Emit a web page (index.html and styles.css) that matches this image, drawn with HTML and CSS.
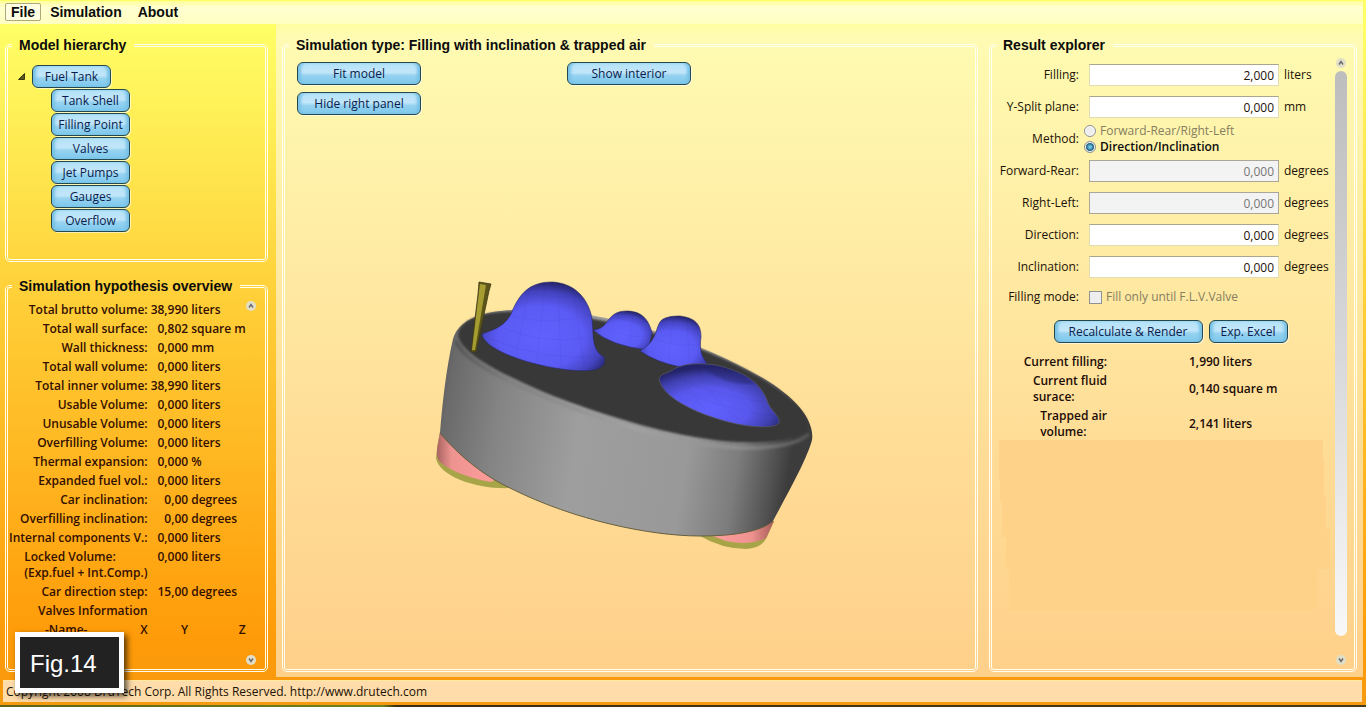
FILE: index.html
```html
<!DOCTYPE html>
<html lang="en">
<head>
<meta charset="utf-8">
<title>Fuel Tank Simulation</title>
<link rel="stylesheet" href="styles.css">
</head>
<body>
<nav class="menubar">
  <button class="menu-item active">File</button>
  <button class="menu-item">Simulation</button>
  <button class="menu-item">About</button>
</nav>

<main class="workspace">
  <aside class="sidebar">
    <fieldset class="group hierarchy">
      <legend>Model hierarchy</legend>
      <div class="tree-root">
        <svg class="expander" viewBox="0 0 7 7"><path d="M6.500 .5V6.500H.5Z" fill="#5c5420" stroke="#3c3814"/></svg>
        <button class="btn node">Fuel Tank</button>
      </div>
      <div class="tree-children">
        <button class="btn node">Tank Shell</button>
        <button class="btn node">Filling Point</button>
        <button class="btn node">Valves</button>
        <button class="btn node">Jet Pumps</button>
        <button class="btn node">Gauges</button>
        <button class="btn node">Overflow</button>
      </div>
    </fieldset>

    <fieldset class="group overview">
      <legend>Simulation hypothesis overview</legend>
      <table class="facts">
        <tr><th>Total brutto volume:</th><td class="num">38,990</td><td>liters</td></tr>
        <tr><th>Total wall surface:</th><td class="num">0,802</td><td>square m</td></tr>
        <tr><th>Wall thickness:</th><td class="num">0,000</td><td>mm</td></tr>
        <tr><th>Total wall volume:</th><td class="num">0,000</td><td>liters</td></tr>
        <tr><th>Total inner volume:</th><td class="num">38,990</td><td>liters</td></tr>
        <tr><th>Usable Volume:</th><td class="num">0,000</td><td>liters</td></tr>
        <tr><th>Unusable Volume:</th><td class="num">0,000</td><td>liters</td></tr>
        <tr><th>Overfilling Volume:</th><td class="num">0,000</td><td>liters</td></tr>
        <tr><th>Thermal expansion:</th><td class="num">0,000</td><td>%</td></tr>
        <tr><th>Expanded fuel vol.:</th><td class="num">0,000</td><td>liters</td></tr>
        <tr><th>Car inclination:</th><td class="num">0,00</td><td>degrees</td></tr>
        <tr><th>Overfilling inclination:</th><td class="num">0,00</td><td>degrees</td></tr>
        <tr><th>Internal components V.:</th><td class="num">0,000</td><td>liters</td></tr>
        <tr><th><span class="two-line">Locked Volume:<br>(Exp.fuel + Int.Comp.)</span></th><td class="num">0,000</td><td>liters</td></tr>
        <tr><th>Car direction step:</th><td class="num">15,00</td><td>degrees</td></tr>
        <tr><th>Valves Information</th><td></td><td></td></tr>
        <tr><th><span class="name-x"><span>-Name-</span><span>X</span></span></th><td class="num">Y</td><td class="num">Z</td></tr>
      </table>
      <div class="scroller">
        <button class="round" aria-label="Scroll up"><svg viewBox="0 0 10 10"><path d="M3 6.500 5 3.500 7 6.500"/></svg></button>
        <button class="round" aria-label="Scroll down"><svg viewBox="0 0 10 10"><path d="M3 3.500 5 6.500 7 3.500"/></svg></button>
      </div>
    </fieldset>
  </aside>

  <section class="content">
    <fieldset class="group view">
      <legend>Simulation type: Filling with inclination &amp; trapped air</legend>
      <div class="view-buttons">
        <button class="btn">Fit model</button>
        <button class="btn">Show interior</button>
        <button class="btn">Hide right panel</button>
      </div>
      <div class="canvas">
      <svg class="tank" viewBox="0 0 377 269" role="img" aria-label="Fuel tank model">
        <defs>
          <linearGradient id="side" x1="0" x2="1" y2=".1"><stop offset="0" stop-color="#505050"/><stop offset=".06" stop-color="#6a6a6a"/><stop offset=".2" stop-color="#848484"/><stop offset=".42" stop-color="#9e9e9e"/><stop offset=".72" stop-color="#999"/><stop offset=".86" stop-color="#7c7c7c"/><stop offset=".95" stop-color="#545454"/><stop offset="1" stop-color="#3c3c3c"/></linearGradient>
          <linearGradient id="rim" x1="0" x2="1"><stop offset="0" stop-color="#555"/><stop offset=".15" stop-color="#808080"/><stop offset=".5" stop-color="#a2a2a2"/><stop offset=".8" stop-color="#8e8e8e"/><stop offset="1" stop-color="#505050"/></linearGradient>
          <radialGradient id="dome" cx=".48" cy=".62" r=".64"><stop offset="0" stop-color="#6161ff"/><stop offset=".55" stop-color="#5a5af4"/><stop offset=".8" stop-color="#4343bf"/><stop offset="1" stop-color="#20205e"/></radialGradient>
          <radialGradient id="flat" cx=".42" cy=".72" r=".66"><stop offset="0" stop-color="#6060ff"/><stop offset=".5" stop-color="#5858ee"/><stop offset=".8" stop-color="#4040b0"/><stop offset="1" stop-color="#24246a"/></radialGradient>
          <linearGradient id="pinkL" x1="0" x2="1"><stop offset="0" stop-color="#a96461"/><stop offset=".25" stop-color="#ed9390"/><stop offset="1" stop-color="#ff9e9b"/></linearGradient>
          <linearGradient id="pinkR" x1="0" x2="1"><stop offset="0" stop-color="#ff9f9c"/><stop offset=".65" stop-color="#ee9290"/><stop offset="1" stop-color="#a85c58"/></linearGradient>
          <filter id="soft" x="-5%" y="-5%" width="110%" height="110%"><feGaussianBlur stdDeviation="1"/></filter>
        </defs>
        <path d="M4 151Q1 164 0 177C3 196 43 209 76 207Z" fill="#a8a448"/>
        <path d="M4 151 1 168Q0 178 5 182 22 195 55 201L60 198Z" fill="url(#pinkL)"/>
        <path d="M262 254Q286 268 310 268 326 267 331 256L338 240Z" fill="#a8a448"/>
        <path d="M274 254 290 260Q313 265 330 257L338 240Z" fill="url(#pinkR)"/>
        <path d="M64 30C40 33 22 41 17 58 10 88 6 126 4 152 22 174 49 196 76 208 138 239 214 255 264 255 300 255 326 250 337 240 352 212 371 178 376 159 379 140 360 116 325 96 260 58 150 20 64 30Z" fill="url(#side)"/>
        <path d="M4 152C22 174 49 196 76 208 138 239 214 255 264 255 300 255 326 250 337 240" fill="none" stroke="#66603f"/>
        <path d="M20 60C25 77 63 97 106 115 158 137 248 166 309 167 337 167 362 163 373 153" fill="none" stroke="url(#rim)" stroke-width="4" filter="url(#soft)"/>
        <path d="M22 54C24 40 42 32 69 31 156 27 267 62 325 97 359 118 377 140 371 149 358 159 334 162 309 161 248 161 157 131 110 112 66 93 25 73 22 54Z" fill="#383838" filter="url(#soft)"/>
        <path d="M157 49Q166 48 170 42C176 34 180 30 191 30 206 30 213 39 216 52L212 69Q175 65 157 49Z" fill="url(#dome)" stroke="#292962" stroke-width=".6"/>
        <path d="M204 70C221 60 219 49 224 41 227 36 236 35 244 35 259 37 265 43 265 56 263 69 266 77 272 83Q263 90 244 86 220 81 204 70Z" fill="url(#dome)" stroke="#292962" stroke-width=".6"/>
        <path d="M46 53C59 48 68 46 75 33 83 13 93 1 116 1 137 2 150 15 155 33 159 48 153 68 168 76Q171 84 162 88C137 96 48 75 46 53Z" fill="url(#dome)" stroke="#292962" stroke-width=".6"/>
        <path d="M223 97Q225 93 233 91C247 81 263 82 280 84 309 91 325 101 332 122 336 131 345 136 343 142 337 149 307 146 282 138 249 128 224 112 223 97Z" fill="url(#flat)" stroke="#555562" stroke-width=".8"/>
        <path d="M271 88C284 84 308 92 318 103 302 104 279 98 271 88Z" fill="#25256e" opacity=".5" filter="url(#soft)"/>
        <g fill="none" stroke="#26267a" stroke-opacity=".1" stroke-width=".6">
          <path d="M77 35Q112 45 154 34M67 47Q110 65 156 56M55 58Q105 79 161 76M90 13Q116 17 144 15M109 2 101 80M122 2 125 87M93 9 80 74M138 11 148 85"/>
          <path d="M224 45Q243 52 264 47M219 58Q242 67 264 63M237 36 233 79M251 37 253 82M181 36Q196 43 213 41M171 48Q191 58 213 55M197 32 194 62"/>
          <path d="M239 94Q262 111 328 121M232 101Q268 125 338 135M262 85Q263 106 307 142M282 86Q290 110 329 140M249 88Q246 105 270 129"/>
        </g>
        <path d="M43 1 55 3 53 10 40 71H35L42 13Z" fill="#5b5517" stroke="#3f3a16" stroke-width=".8"/>
        <path d="M44 3 50 4 39 69H36Z" fill="#a69d32"/>
      </svg>
      </div>
    </fieldset>

    <fieldset class="group results">
      <legend>Result explorer</legend>
      <div class="results-body">
        <form class="form">
          <label for="filling">Filling:</label><input class="box" id="filling" type="text" value="2,000"><span class="unit">liters</span>
          <label for="split">Y-Split plane:</label><input class="box" id="split" type="text" value="0,000"><span class="unit">mm</span>
          <span class="caption">Method:</span>
          <div class="choices">
            <label class="choice off"><input type="radio" name="method" disabled>Forward-Rear/Right-Left</label>
            <label class="choice on"><input type="radio" name="method" checked>Direction/Inclination</label>
          </div>
          <label for="fr">Forward-Rear:</label><input class="box" id="fr" type="text" value="0,000" disabled><span class="unit">degrees</span>
          <label for="rl">Right-Left:</label><input class="box" id="rl" type="text" value="0,000" disabled><span class="unit">degrees</span>
          <label for="dir">Direction:</label><input class="box" id="dir" type="text" value="0,000"><span class="unit">degrees</span>
          <label for="inc">Inclination:</label><input class="box" id="inc" type="text" value="0,000"><span class="unit">degrees</span>
          <span class="caption mode-label">Filling mode:</span>
          <label class="choice off mode"><input type="checkbox" disabled>Fill only until F.L.V.Valve</label>
        </form>
        <div class="actions">
          <button class="btn wide">Recalculate &amp; Render</button>
          <button class="btn node">Exp. Excel</button>
        </div>
        <table class="outcome">
          <tr><th>Current filling:</th><td>1,990 liters</td></tr>
          <tr><th><span class="two-line">Current fluid<br>surace:</span></th><td>0,140 square m</td></tr>
          <tr><th><span class="two-line">Trapped air<br>volume:</span></th><td>2,141 liters</td></tr>
        </table>
        <svg class="blank" viewBox="0 0 331 180" preserveAspectRatio="none"><path d="M0 0H324V21H325V57H327V89H331V129H319V170H10V129H7V97H3V61H1V39H0Z" fill="#ffd28a"/></svg>
      </div>
      <div class="scroller">
        <button class="round" aria-label="Scroll up"><svg viewBox="0 0 10 10"><path d="M3 6.500 5 3.500 7 6.500"/></svg></button>
        <div class="thumb"></div>
        <button class="round" aria-label="Scroll down"><svg viewBox="0 0 10 10"><path d="M3 3.500 5 6.500 7 3.500"/></svg></button>
      </div>
    </fieldset>
  </section>
</main>

<footer class="status">Copyright 2008 DruTech Corp. All Rights Reserved. http://www.drutech.com</footer>
<div class="edge"></div>
<div class="figure-tag">Fig.14</div>
</body>
</html>
```

FILE: styles.css
```css
* { box-sizing: border-box; }

body {
  margin: 0;
  min-height: 100vh;
  display: flex;
  flex-direction: column;
  position: relative;
  font: 12px/16px "Open Sans", "Noto Sans", sans-serif;
  color: #1c1206;
  background: linear-gradient(#ffff66 24px, #ffcf38 300px, #ff9b08 640px, #f59a10);
}

button, input { font: inherit; color: inherit; }

.menubar {
  display: flex;
  align-items: flex-start;
  height: 23px;
  margin: 1px 3px 0 0;
  padding: 2px 0 0 5px;
  gap: 2px;
  background: linear-gradient(#ffff9a, #ffffd2 30%, #ffffc0);
}
.menu-item {
  height: 18px;
  padding: 0 6px;
  border: 1px solid transparent;
  background: none;
  font: bold 14px/16px "Liberation Sans", sans-serif;
  color: #0c0c0c;
}
.menu-item.active {
  padding: 0 5px;
  border-color: #b0a878;
  border-radius: 2px;
  background: #fffde2;
}

.workspace { flex: 1; display: flex; }
.sidebar {
  width: 276px;
  padding: 12px 8px 5px 5px;
  display: flex;
  flex-direction: column;
  gap: 15px;
}
.content {
  flex: 1;
  display: flex;
  gap: 11px;
  margin-right: 3px;
  padding: 12px 6px 5px;
  background: linear-gradient(#fffda0, #fffbb2 12px, #ffeca4 220px, #ffdc96 430px, #ffd08a);
}

.group {
  margin: 0;
  min-width: 0;
  border: 3px double #fffff0;
  border-radius: 5px;
  padding: 0;
}
.group legend {
  margin-left: 4px;
  padding: 0 8px 0 7px;
  font: bold 14px/18px "Liberation Sans", sans-serif;
  color: #0c0c0c;
}

.hierarchy { height: 226px; }
.tree-root { display: flex; align-items: center; gap: 7px; padding: 11px 0 1px 10px; }
.expander { width: 7px; height: 7px; }
.tree-children { display: flex; flex-direction: column; gap: 1px; padding-left: 43px; }

.btn {
  height: 23px;
  padding: 1px 2px 0;
  white-space: nowrap;
  color: #0a1c4c;
  border: 1px solid #25484c;
  border-radius: 6px;
  background: linear-gradient(#b4e2f7, #c2e6fa 45%, #96d2f0 60%, #7cc8ec);
  box-shadow: inset 4px 0 3px -1px #78c2e6, inset -4px 0 3px -1px #78c2e6, 1px 1px 0 #fff9;
}
.node { width: 79px; }
.wide { width: 149px; }

.overview { flex: 1; display: flex; justify-content: space-between; }
.facts { margin: 7px 0 0 1px; border-spacing: 0; align-self: flex-start; color: #330f00; }
.facts th, .facts td {
  padding: 0 3px 3px 0;
  white-space: nowrap;
  text-align: right;
  vertical-align: top;
  font-weight: 600;
}
.facts th { width: 139px; }
.facts td { text-align: left; }
.facts .num { text-align: right; }
.two-line { display: inline-block; text-align: left; }
.name-x { display: flex; justify-content: space-between; padding-left: 36px; }

.scroller {
  display: flex;
  flex-direction: column;
  align-items: center;
  justify-content: space-between;
  margin-left: -8px;
  padding: 4px 7px 4px 0;
}
.overview .scroller { padding: 6px 9px 4px 0; }
.round {
  width: 10px;
  height: 10px;
  padding: 0;
  border: 0;
  border-radius: 5px;
  background: #e2dfc8;
}
.round svg { display: block; fill: none; stroke: #6c6a70; stroke-width: 1.500; }
.thumb {
  flex: 1;
  width: 12px;
  margin: 3px 0 19px;
  border-radius: 6px;
  background: linear-gradient(#bdbdbd, #d8d8da 50%, #f8f8f8);
}

.view { flex: 1; }
.view-buttons {
  display: grid;
  grid-template-columns: 124px 124px;
  gap: 7px 146px;
  padding: 8px 0 0 12px;
}
.canvas { display: flex; justify-content: center; padding: 166px 12px 0 0; }
.tank { width: 377px; height: 269px; }

.results { width: 368px; display: flex; }
.results-body { flex: 1; display: flex; flex-direction: column; min-width: 0; padding-top: 5px; }
.form {
  display: grid;
  grid-template-columns: 97px 190px 1fr;
  grid-auto-rows: 32px;
  align-items: center;
}
.form > label:not(.choice), .caption { padding-right: 10px; text-align: right; white-space: nowrap; }
.unit { padding-left: 5px; }
.box {
  width: 190px;
  height: 22px;
  margin: 0;
  padding: 0 4px;
  text-align: right;
  border: 1px solid #e0dcb4;
  border-top-color: #aaa68c;
  background: #fff;
}
.box:disabled { border-color: #aaa698; background: #f3f3f3; color: #777; }
.choices { grid-column: 2 / 4; display: flex; flex-direction: column; margin-left: -5px; }
.choice { display: flex; align-items: center; gap: 4px; white-space: nowrap; }
.choice.off { color: #857e60; }
.choice.on { font-weight: 600; color: #0c0c0c; }
.choice input { appearance: none; flex: none; margin: 0; width: 12px; height: 12px; border: 1px solid #8e9290; background: #eee; }
.choice input[type="radio"] { border-radius: 6px; box-shadow: inset 0 0 0 1px #fff; }
.choice input[type="radio"]:checked { background: radial-gradient(#6cc5e6 1px, #17506e 4px, #ddd 5px); }
.choice input[type="checkbox"] { width: 13px; height: 13px; }
.choice.mode { grid-column: 2 / 4; }
.mode-label, .mode { align-self: start; margin-top: 6px; }

.actions { display: flex; justify-content: center; gap: 6px; padding: 5px 0 0 6px; }
.outcome { margin: 8px 0 0 23px; border-spacing: 0; align-self: flex-start; color: #1c0c06; }
.outcome th, .outcome td { padding: 3px 0 0; font-weight: 600; text-align: left; white-space: nowrap; }
.outcome th { width: 92px; text-align: right; }
.outcome td { padding-left: 82px; }
.blank { width: 331px; height: 180px; margin-left: 7px; }

.status {
  height: 22px;
  margin: 3px 4px 3px 3px;
  padding: 3px 3px 0;
  border-top: 1px solid #ffe9a0;
  background: #ffdcaa;
}
.edge { height: 2px; background: linear-gradient(90deg, #5c6414, #6b8420 28%, #3c2c14 29%, #4a3a1c); }

.figure-tag {
  position: absolute;
  left: 15px;
  bottom: 14px;
  padding: 11px 22px 9px 10px;
  border: 5px solid #fff;
  background: #222;
  color: #fff;
  font: 24px/31px "Liberation Sans", sans-serif;
  box-shadow: 3px 3px 6px #000a;
}
```
